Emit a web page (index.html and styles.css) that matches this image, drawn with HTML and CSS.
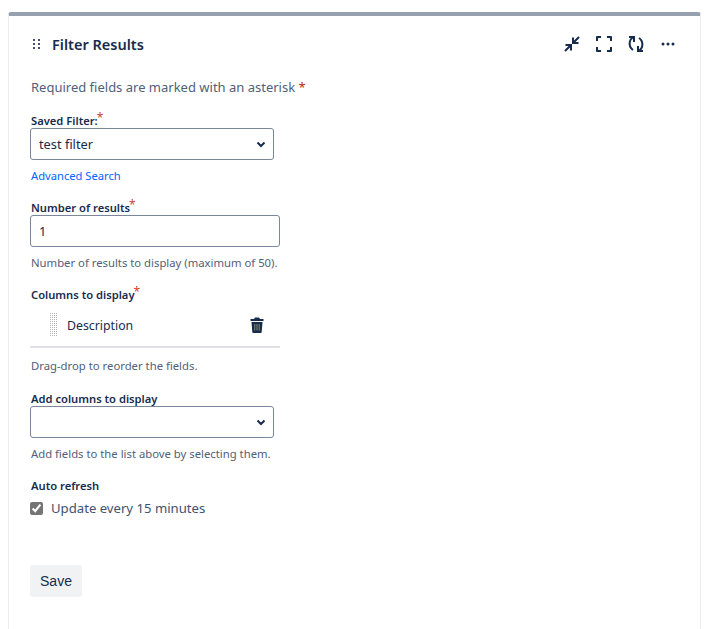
FILE: index.html
```html
<!DOCTYPE html>
<html lang="en">
<head>
    <meta charset="UTF-8">
    <meta name="viewport" content="width=device-width, initial-scale=1.0">
    <title>Filter Results</title>
    <link rel="stylesheet" href="styles.css">
</head>
<body>
    <div class="card">
        <div class="card-header">
            <svg class="grip" width="10" height="12" viewBox="0 0 10 12">
                <g fill="#42526e">
                    <rect x="1" y="1" width="2" height="2"/><rect x="6" y="1" width="2" height="2"/>
                    <rect x="1" y="5" width="2" height="2"/><rect x="6" y="5" width="2" height="2"/>
                    <rect x="1" y="9" width="2" height="2"/><rect x="6" y="9" width="2" height="2"/>
                </g>
            </svg>
            <h1>Filter Results</h1>
            <div class="header-icons">
                <svg width="20" height="20" viewBox="0 0 20 20" fill="none" stroke="#172b4d" stroke-width="2">
                    <path d="M17 3l-5.500 5.500M11 3.500V9h5.500"/>
                    <path d="M3 17l5.500-5.500M3.500 11H9v5.500"/>
                </svg>
                <svg width="20" height="20" viewBox="0 0 20 20" fill="none" stroke="#172b4d" stroke-width="2" stroke-linejoin="round">
                    <path d="M7 3H3v4M13 3h4v4M17 13v4h-4M7 17H3v-4"/>
                </svg>
                <svg width="20" height="20" viewBox="0 0 20 20" fill="none" stroke="#172b4d" stroke-width="2">
                    <path d="M7 3.500C2.500 6 2.500 13 7 16"/>
                    <path d="M13 16.500C17.500 14 17.500 7 13 4"/>
                    <path d="M3 3h5v5M17 17h-5v-5"/>
                </svg>
                <svg width="20" height="20" viewBox="0 0 20 20" fill="#172b4d">
                    <circle cx="5" cy="10" r="1.500"/><circle cx="10" cy="10" r="1.500"/><circle cx="15" cy="10" r="1.500"/>
                </svg>
            </div>
        </div>

        <form class="filter-form">
            <p class="required-note">Required fields are marked with an asterisk <span class="star">*</span></p>

            <div class="field field-saved">
                <label for="savedFilter">Saved Filter:<span class="star-up">*</span></label>
                <select id="savedFilter" class="select">
                    <option>test filter</option>
                </select>
                <a class="link" href="#">Advanced Search</a>
            </div>

            <div class="field field-number">
                <label for="numResults">Number of results<span class="star-up">*</span></label>
                <input id="numResults" class="text-input" type="text" value="1">
                <p class="hint">Number of results to display (maximum of 50).</p>
            </div>

            <div class="field field-columns">
                <label class="label-columns">Columns to display<span class="star-up">*</span></label>
                <div class="column-row">
                    <span class="drag-handle"></span>
                    <span class="column-name">Description</span>
                    <svg class="trash" width="14" height="16" viewBox="0 0 14 16">
                        <path fill="#172b4d" d="M5 0.500h4l1 1.500h3.500v2H.5V2H4zM1.500 5h11l-.8 10a1 1 0 0 1-1 1H3.300a1 1 0 0 1-1-1z"/>
                        <path stroke="#8a8f6a" stroke-width="1" d="M4.800 7v6.500M7 7v6.500M9.200 7v6.500"/>
                    </svg>
                </div>
                <p class="hint hint-drag">Drag-drop to reorder the fields.</p>
            </div>

            <div class="field field-add">
                <label for="addColumn">Add columns to display</label>
                <select id="addColumn" class="select">
                    <option></option>
                </select>
                <p class="hint">Add fields to the list above by selecting them.</p>
            </div>

            <div class="field field-refresh">
                <label>Auto refresh</label>
                <div class="check-row">
                    <input id="autoRefresh" type="checkbox" checked>
                    <label class="check-label" for="autoRefresh">Update every 15 minutes</label>
                </div>
            </div>

            <button class="save-btn" type="button">Save</button>
        </form>
    </div>
</body>
</html>
```

FILE: styles.css
```css
html, body {
    height: 100%;
}
body {
    margin: 0;
    padding: 12px 17px 0 8px;
    box-sizing: border-box;
    overflow: hidden;
    background: #fff;
    font-family: "Noto Sans", "Open Sans", sans-serif;
    color: #172b4d;
}
.card {
    height: 640px;
    box-sizing: border-box;
    border: 1px solid #ebecf0;
    border-top: 4px solid #97a0af;
    border-radius: 3px 3px 0 0;
}
.card-header {
    display: flex;
    align-items: center;
    height: 56px;
    padding: 0 22px 0 23px;
}
.grip {
    margin-right: 10px;
}
.card-header h1 {
    margin: 0;
    font-size: 14.500px;
    font-weight: 600;
}
.header-icons {
    display: flex;
    gap: 12px;
    margin-left: auto;
}
.filter-form {
    padding: 5px 20px 0 21px;
}
.required-note {
    margin: 0 0 16px;
    padding-left: 1px;
    font-size: 13px;
    line-height: 20px;
    color: #505f79;
}
.star {
    color: #bf2600;
}
.star-up {
    position: relative;
    top: -3px;
    margin-left: -1px;
    font-size: 12px;
    line-height: 0;
    font-weight: 400;
    color: #d04437;
}
.field label {
    display: block;
    padding-left: 1px;
    font-size: 11.200px;
    font-weight: 600;
    line-height: 15px;
}
.field .label-columns {
    margin-bottom: 2px;
}
.select {
    display: block;
    width: 244px;
    height: 32px;
    padding: 0 8px;
    box-sizing: border-box;
    border: 1px solid #7a869a;
    border-radius: 3px;
    appearance: none;
    background: #fff url("data:image/svg+xml,%3Csvg xmlns='http://www.w3.org/2000/svg' width='10' height='7'%3E%3Cpath d='M1.500 1.500L5 5l3.500-3.500' fill='none' stroke='%23172b4d' stroke-width='2'/%3E%3C/svg%3E") no-repeat right 7px center;
    color: #172b4d;
    font-family: inherit;
    font-size: 12.800px;
}
.text-input {
    display: block;
    width: 250px;
    height: 32px;
    padding: 0 8px;
    box-sizing: border-box;
    border: 1px solid #7a869a;
    border-radius: 3px;
    color: #172b4d;
    font-family: inherit;
    font-size: 12.800px;
}
.link {
    display: block;
    margin-top: 8px;
    padding-left: 1px;
    font-size: 11.200px;
    line-height: 16px;
    color: #0065ff;
    text-decoration: none;
}
.hint {
    margin: 8px 0 0;
    padding-left: 1px;
    font-size: 11.300px;
    line-height: 16px;
    color: #505f79;
}
.hint-drag {
    margin-top: 10px;
}
.field-number {
    margin-top: 16px;
}
.field-columns {
    margin-top: 16px;
}
.field-add {
    margin-top: 17px;
}
.field-refresh {
    margin-top: 16px;
}
.column-row {
    display: flex;
    align-items: center;
    width: 250px;
    height: 44px;
    box-sizing: border-box;
    padding: 0 16px 0 19px;
    border-bottom: 2px solid #dfe1e6;
}
.drag-handle {
    width: 8px;
    height: 24px;
    margin-right: 10px;
    background: conic-gradient(#b5b5b5 25%, transparent 0) 0 0 / 2px 2px;
}
.column-name {
    font-size: 12.300px;
}
.trash {
    margin-left: auto;
}
.check-row {
    display: flex;
    align-items: center;
    margin-top: 5px;
}
.check-row input {
    width: 13px;
    height: 13px;
    margin: 0 8px 0 0;
    accent-color: #757575;
}
.field .check-label {
    padding-left: 0;
    font-size: 13.150px;
    font-weight: 400;
    line-height: 20px;
    color: #42526e;
}
.save-btn {
    display: block;
    width: 52px;
    height: 32px;
    margin-top: 47px;
    padding: 0;
    border: 0;
    border-radius: 3px;
    background: #f1f2f4;
    color: #172b4d;
    font-family: "Liberation Sans", Arial, sans-serif;
    font-size: 14px;
}
```
